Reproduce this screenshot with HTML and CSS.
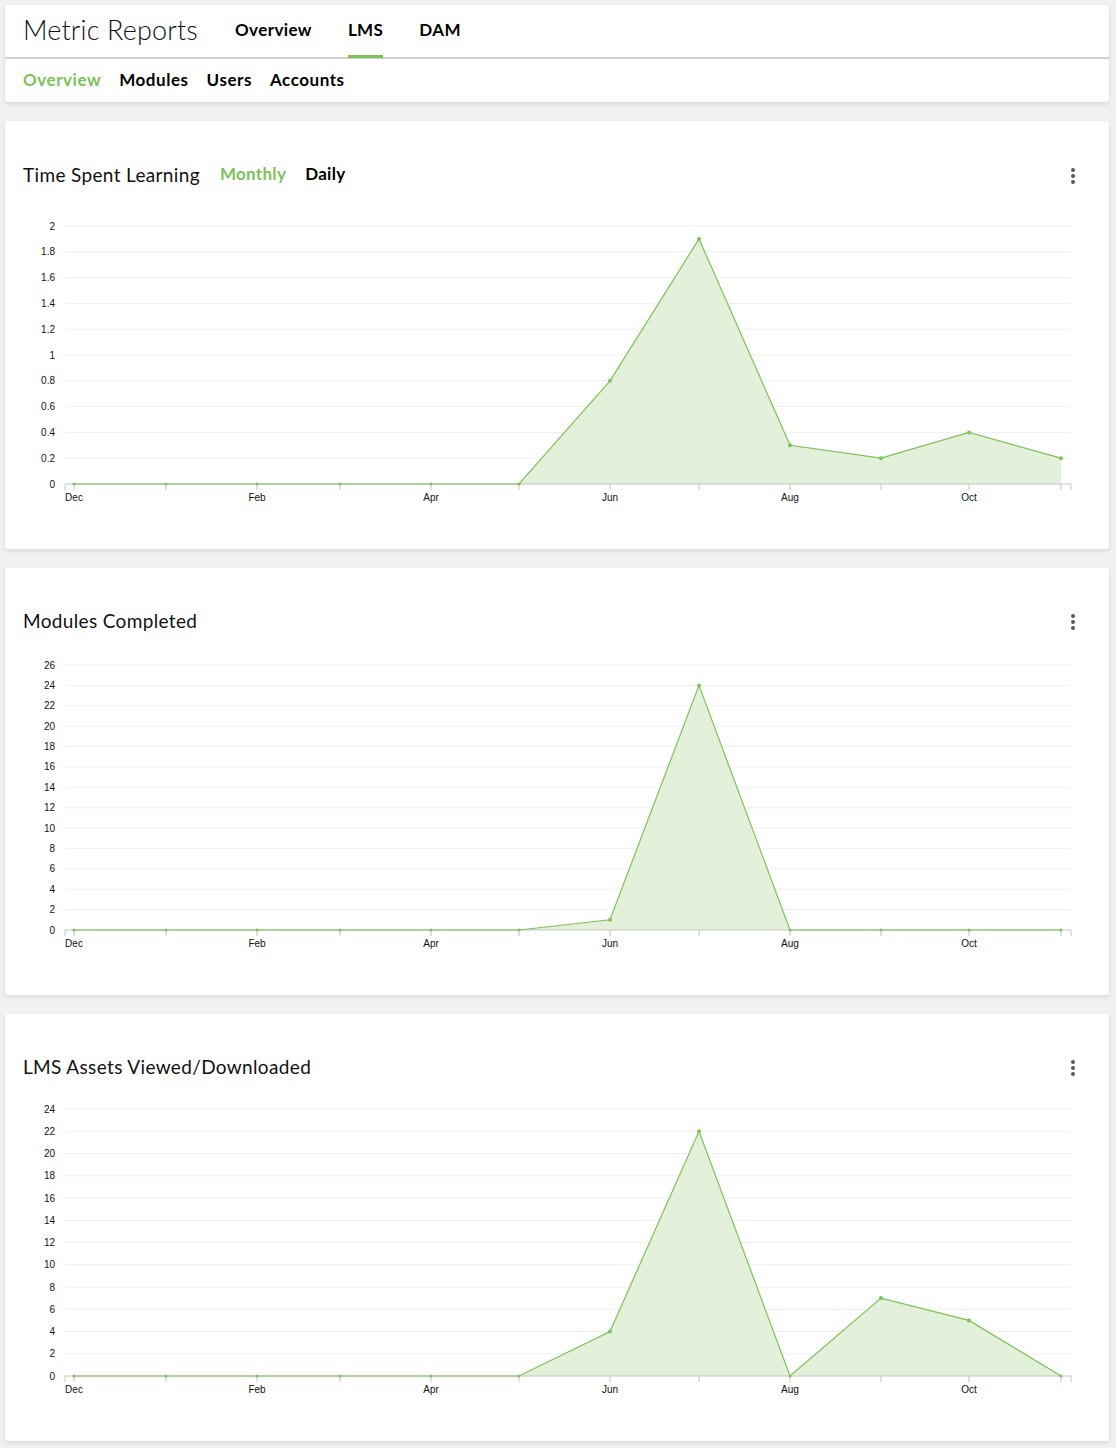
FILE: index.html
```html
<!DOCTYPE html>
<html lang="en">
<head>
<meta charset="utf-8">
<title>Metric Reports</title>
<link rel="stylesheet" href="styles.css">
</head>
<body>
<div class="page">
  <header class="card header">
    <div class="top-row">
      <h1 class="brand">Metric Reports</h1>
      <nav class="main-nav">
        <a class="nav-item">Overview</a>
        <a class="nav-item active">LMS</a>
        <a class="nav-item">DAM</a>
      </nav>
    </div>
    <nav class="sub-nav">
      <a class="sub-item active">Overview</a>
      <a class="sub-item">Modules</a>
      <a class="sub-item">Users</a>
      <a class="sub-item">Accounts</a>
    </nav>
  </header>

  <section class="card chart-card first">
    <div class="card-head">
      <h2 class="card-title">Time Spent Learning</h2>
      <div class="toggle"><span class="toggle-item active">Monthly</span><span class="toggle-item">Daily</span></div>
      <svg class="more" width="6" height="18" viewBox="0 0 6 18"><circle cx="3" cy="3" r="2" /><circle cx="3" cy="9" r="2" /><circle cx="3" cy="15" r="2" /></svg>
    </div>
    <svg class="chart" width="1104" height="348" viewBox="0 80 1104 348">
      <g class="grid">
        <line x1="60" x2="1066" y1="105" y2="105"/><line x1="60" x2="1066" y1="130.8" y2="130.8"/><line x1="60" x2="1066" y1="156.6" y2="156.6"/><line x1="60" x2="1066" y1="182.4" y2="182.4"/><line x1="60" x2="1066" y1="208.2" y2="208.2"/><line x1="60" x2="1066" y1="234" y2="234"/><line x1="60" x2="1066" y1="259.8" y2="259.8"/><line x1="60" x2="1066" y1="285.6" y2="285.6"/><line x1="60" x2="1066" y1="311.4" y2="311.4"/><line x1="60" x2="1066" y1="337.2" y2="337.2"/>
      </g>
      <g class="ylab">
        <text x="50" y="105">2</text><text x="50" y="130.8">1.8</text><text x="50" y="156.6">1.6</text><text x="50" y="182.4">1.4</text><text x="50" y="208.2">1.2</text><text x="50" y="234">1</text><text x="50" y="259.8">0.8</text><text x="50" y="285.6">0.6</text><text x="50" y="311.4">0.4</text><text x="50" y="337.2">0.2</text><text x="50" y="363">0</text>
      </g>
      <path class="area" d="M69,363 L161,363 L252,363 L335,363 L426,363 L514,363 L605,259.8 L694,117.9 L785,324.3 L876,337.2 L964,311.4 L1056,337.2 L1056,363 Z"/>
      <g class="axis">
        <path d="M60,369 V363 H1066 V369"/>
        <line x1="69" x2="69" y1="363" y2="369"/><line x1="161" x2="161" y1="363" y2="369"/><line x1="252" x2="252" y1="363" y2="369"/><line x1="335" x2="335" y1="363" y2="369"/><line x1="426" x2="426" y1="363" y2="369"/><line x1="514" x2="514" y1="363" y2="369"/><line x1="605" x2="605" y1="363" y2="369"/><line x1="694" x2="694" y1="363" y2="369"/><line x1="785" x2="785" y1="363" y2="369"/><line x1="876" x2="876" y1="363" y2="369"/><line x1="964" x2="964" y1="363" y2="369"/><line x1="1056" x2="1056" y1="363" y2="369"/>
      </g>
      <g class="xlab">
        <text x="69" y="380">Dec</text><text x="252" y="380">Feb</text><text x="426" y="380">Apr</text><text x="605" y="380">Jun</text><text x="785" y="380">Aug</text><text x="964" y="380">Oct</text>
      </g>
      <polyline class="line" points="69,363 161,363 252,363 335,363 426,363 514,363 605,259.8 694,117.9 785,324.3 876,337.2 964,311.4 1056,337.2"/>
      <g class="dots">
        <circle cx="69" cy="363" r="1.5"/><circle cx="161" cy="363" r="1.5"/><circle cx="252" cy="363" r="1.5"/><circle cx="335" cy="363" r="1.5"/><circle cx="426" cy="363" r="1.5"/><circle cx="514" cy="363" r="1.5"/><circle cx="605" cy="259.8" r="2"/><circle cx="694" cy="117.9" r="2"/><circle cx="785" cy="324.3" r="2"/><circle cx="876" cy="337.2" r="2"/><circle cx="964" cy="311.4" r="2"/><circle cx="1056" cy="337.2" r="2"/>
      </g>
    </svg>
  </section>

  <section class="card chart-card">
    <div class="card-head">
      <h2 class="card-title">Modules Completed</h2>
      <svg class="more" width="6" height="18" viewBox="0 0 6 18"><circle cx="3" cy="3" r="2" /><circle cx="3" cy="9" r="2" /><circle cx="3" cy="15" r="2" /></svg>
    </div>
    <svg class="chart" width="1104" height="347" viewBox="0 80 1104 347">
      <g class="grid">
        <line x1="60" x2="1066" y1="97" y2="97"/><line x1="60" x2="1066" y1="117.4" y2="117.4"/><line x1="60" x2="1066" y1="137.8" y2="137.8"/><line x1="60" x2="1066" y1="158.2" y2="158.2"/><line x1="60" x2="1066" y1="178.5" y2="178.5"/><line x1="60" x2="1066" y1="198.9" y2="198.9"/><line x1="60" x2="1066" y1="219.3" y2="219.3"/><line x1="60" x2="1066" y1="239.7" y2="239.7"/><line x1="60" x2="1066" y1="260.1" y2="260.1"/><line x1="60" x2="1066" y1="280.5" y2="280.5"/><line x1="60" x2="1066" y1="300.8" y2="300.8"/><line x1="60" x2="1066" y1="321.2" y2="321.2"/><line x1="60" x2="1066" y1="341.6" y2="341.6"/>
      </g>
      <g class="ylab">
        <text x="50" y="97">26</text><text x="50" y="117.4">24</text><text x="50" y="137.8">22</text><text x="50" y="158.2">20</text><text x="50" y="178.5">18</text><text x="50" y="198.9">16</text><text x="50" y="219.3">14</text><text x="50" y="239.7">12</text><text x="50" y="260.1">10</text><text x="50" y="280.5">8</text><text x="50" y="300.8">6</text><text x="50" y="321.2">4</text><text x="50" y="341.6">2</text><text x="50" y="362">0</text>
      </g>
      <path class="area" d="M69,362 L161,362 L252,362 L335,362 L426,362 L514,362 L605,351.8 L694,117.4 L785,362 L876,362 L964,362 L1056,362 Z"/>
      <g class="axis">
        <path d="M60,368 V362 H1066 V368"/>
        <line x1="69" x2="69" y1="362" y2="368"/><line x1="161" x2="161" y1="362" y2="368"/><line x1="252" x2="252" y1="362" y2="368"/><line x1="335" x2="335" y1="362" y2="368"/><line x1="426" x2="426" y1="362" y2="368"/><line x1="514" x2="514" y1="362" y2="368"/><line x1="605" x2="605" y1="362" y2="368"/><line x1="694" x2="694" y1="362" y2="368"/><line x1="785" x2="785" y1="362" y2="368"/><line x1="876" x2="876" y1="362" y2="368"/><line x1="964" x2="964" y1="362" y2="368"/><line x1="1056" x2="1056" y1="362" y2="368"/>
      </g>
      <g class="xlab">
        <text x="69" y="379">Dec</text><text x="252" y="379">Feb</text><text x="426" y="379">Apr</text><text x="605" y="379">Jun</text><text x="785" y="379">Aug</text><text x="964" y="379">Oct</text>
      </g>
      <polyline class="line" points="69,362 161,362 252,362 335,362 426,362 514,362 605,351.8 694,117.4 785,362 876,362 964,362 1056,362"/>
      <g class="dots">
        <circle cx="69" cy="362" r="1.5"/><circle cx="161" cy="362" r="1.5"/><circle cx="252" cy="362" r="1.5"/><circle cx="335" cy="362" r="1.5"/><circle cx="426" cy="362" r="1.5"/><circle cx="514" cy="362" r="1.5"/><circle cx="605" cy="351.8" r="2"/><circle cx="694" cy="117.4" r="2"/><circle cx="785" cy="362" r="1.5"/><circle cx="876" cy="362" r="1.5"/><circle cx="964" cy="362" r="1.5"/><circle cx="1056" cy="362" r="1.5"/>
      </g>
    </svg>
  </section>

  <section class="card chart-card">
    <div class="card-head">
      <h2 class="card-title">LMS Assets Viewed/Downloaded</h2>
      <svg class="more" width="6" height="18" viewBox="0 0 6 18"><circle cx="3" cy="3" r="2" /><circle cx="3" cy="9" r="2" /><circle cx="3" cy="15" r="2" /></svg>
    </div>
    <svg class="chart" width="1104" height="347" viewBox="0 80 1104 347">
      <g class="grid">
        <line x1="60" x2="1066" y1="95" y2="95"/><line x1="60" x2="1066" y1="117.25" y2="117.25"/><line x1="60" x2="1066" y1="139.5" y2="139.5"/><line x1="60" x2="1066" y1="161.75" y2="161.75"/><line x1="60" x2="1066" y1="184" y2="184"/><line x1="60" x2="1066" y1="206.25" y2="206.25"/><line x1="60" x2="1066" y1="228.5" y2="228.5"/><line x1="60" x2="1066" y1="250.75" y2="250.75"/><line x1="60" x2="1066" y1="273" y2="273"/><line x1="60" x2="1066" y1="295.25" y2="295.25"/><line x1="60" x2="1066" y1="317.5" y2="317.5"/><line x1="60" x2="1066" y1="339.75" y2="339.75"/>
      </g>
      <g class="ylab">
        <text x="50" y="95">24</text><text x="50" y="117.25">22</text><text x="50" y="139.5">20</text><text x="50" y="161.75">18</text><text x="50" y="184">16</text><text x="50" y="206.25">14</text><text x="50" y="228.5">12</text><text x="50" y="250.75">10</text><text x="50" y="273">8</text><text x="50" y="295.25">6</text><text x="50" y="317.5">4</text><text x="50" y="339.75">2</text><text x="50" y="362">0</text>
      </g>
      <path class="area" d="M69,362 L161,362 L252,362 L335,362 L426,362 L514,362 L605,317.5 L694,117.25 L785,362 L876,284.1 L964,306.4 L1056,362 Z"/>
      <g class="axis">
        <path d="M60,368 V362 H1066 V368"/>
        <line x1="69" x2="69" y1="362" y2="368"/><line x1="161" x2="161" y1="362" y2="368"/><line x1="252" x2="252" y1="362" y2="368"/><line x1="335" x2="335" y1="362" y2="368"/><line x1="426" x2="426" y1="362" y2="368"/><line x1="514" x2="514" y1="362" y2="368"/><line x1="605" x2="605" y1="362" y2="368"/><line x1="694" x2="694" y1="362" y2="368"/><line x1="785" x2="785" y1="362" y2="368"/><line x1="876" x2="876" y1="362" y2="368"/><line x1="964" x2="964" y1="362" y2="368"/><line x1="1056" x2="1056" y1="362" y2="368"/>
      </g>
      <g class="xlab">
        <text x="69" y="379">Dec</text><text x="252" y="379">Feb</text><text x="426" y="379">Apr</text><text x="605" y="379">Jun</text><text x="785" y="379">Aug</text><text x="964" y="379">Oct</text>
      </g>
      <polyline class="line" points="69,362 161,362 252,362 335,362 426,362 514,362 605,317.5 694,117.25 785,362 876,284.1 964,306.4 1056,362"/>
      <g class="dots">
        <circle cx="69" cy="362" r="1.5"/><circle cx="161" cy="362" r="1.5"/><circle cx="252" cy="362" r="1.5"/><circle cx="335" cy="362" r="1.5"/><circle cx="426" cy="362" r="1.5"/><circle cx="514" cy="362" r="1.5"/><circle cx="605" cy="317.5" r="2"/><circle cx="694" cy="117.25" r="2"/><circle cx="785" cy="362" r="1.5"/><circle cx="876" cy="284.1" r="2"/><circle cx="964" cy="306.4" r="2"/><circle cx="1056" cy="362" r="1.5"/>
      </g>
    </svg>
  </section>
</div>
</body>
</html>
```

FILE: styles.css
```css
* { box-sizing: border-box; }
html, body { margin: 0; padding: 0; background: #f1f1f1; }
body { font-family: "Lato", "Open Sans", "Liberation Sans", sans-serif; color: #111; }
.page { padding: 5px 7px 7px 5px; display: flex; flex-direction: column; gap: 19px; }
.card {
  background: #fff;
  border-radius: 3px;
  box-shadow: 0 2px 4px rgba(0,0,0,0.10);
}
.header { height: 97px; display: flex; flex-direction: column; }
.top-row {
  height: 54px;
  display: flex;
  align-items: flex-end;
  padding: 0 18px;
  border-bottom: 2px solid #cfcfcf;
  gap: 37px;
}
.brand {
  margin: 0;
  font-weight: 300;
  font-size: 27px;
  line-height: 34px;
  padding-bottom: 10px;
  color: #111;
  letter-spacing: 0.15px;
}
.main-nav { display: flex; gap: 36px; align-self: stretch; align-items: flex-end; }
.nav-item {
  font-weight: 700;
  font-size: 17px;
  line-height: 20px;
  padding-bottom: 15px;
  border-bottom: 3px solid transparent;
  margin-bottom: -1px;
  color: #000;
  letter-spacing: 0.4px;
}
.nav-item.active { border-bottom-color: #7dc257; }
.sub-nav { display: flex; gap: 18px; padding: 11px 18px 0; }
.sub-item { font-weight: 700; font-size: 17px; line-height: 20px; color: #000; letter-spacing: 0.55px; }
.sub-item.active { color: #7dc257; }

.chart-card { height: 427px; display: flex; flex-direction: column; }
.chart-card.first { height: 428px; }
.card-head {
  display: flex;
  align-items: center;
  padding: 41px 33px 0 18px;
  height: 65px;
  gap: 20px;
}
.first .card-head { padding-top: 42px; height: 66px; }
.card-title { margin: 0; font-weight: 400; font-size: 19px; line-height: 24px; color: #111; letter-spacing: 0.35px; }
.toggle { display: flex; gap: 19px; }
.toggle-item { font-weight: 700; font-size: 17px; line-height: 20px; color: #000; margin-top: -2px; letter-spacing: 0.3px; }
.toggle-item.active { color: #7dc257; }
.more { margin-left: auto; fill: #555a63; margin-top: 2px; }
.chart { display: block; margin-top: 15px; }
.first .chart { margin-top: 14px; }
.grid line { stroke: #f0f0f0; stroke-width: 1; }
.ylab text { font-family: "Liberation Sans", Arial, sans-serif; font-size: 10px; text-anchor: end; dominant-baseline: central; fill: #111; }
.xlab text { font-family: "Liberation Sans", Arial, sans-serif; font-size: 10px; text-anchor: middle; fill: #111; }
.axis path, .axis line { stroke: #c4c4c4; stroke-width: 1; fill: none; }
.area { fill: #e3f0da; }
.line { fill: none; stroke: #7dc257; stroke-width: 1.2; }
.dots circle { fill: #7dc257; }
```
